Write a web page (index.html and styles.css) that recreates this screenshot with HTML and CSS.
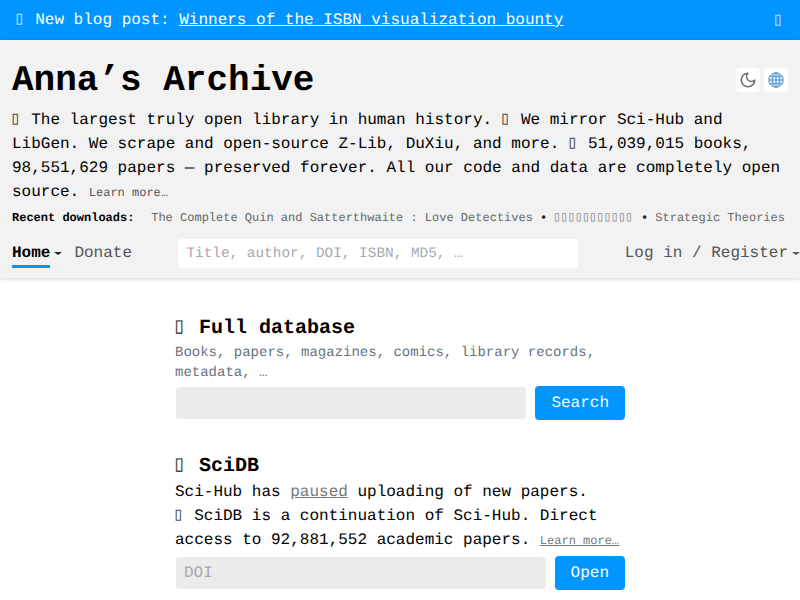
FILE: index.html
```html
<!DOCTYPE html>
<html lang="en">
<head>
<meta charset="utf-8">
<title>Anna’s Archive</title>
<link rel="stylesheet" href="styles.css">
</head>
<body>
<div class="banner">
  <div class="banner-text"><span class="tofu">▯</span> New blog post: <a href="#">Winners of the ISBN visualization bounty</a></div>
  <span class="banner-close tofu">▯</span>
</div>
<header class="header">
  <div class="title-row">
    <h1 class="title">Anna’s Archive</h1>
    <div class="tools">
      <a class="tool" href="#" aria-label="Theme">
        <svg class="moon-icon" viewBox="0 0 24 24" fill="none" stroke="#6b6b76" stroke-width="2" stroke-linecap="round" stroke-linejoin="round"><path d="M12 3a6 6 0 0 0 9 9 9 9 0 1 1-9-9Z"/></svg>
      </a>
      <a class="tool" href="#" aria-label="Language">
        <svg class="globe-icon" viewBox="0 0 24 24" fill="#d3e6f6" stroke="#4a8ec9" stroke-width="1.3"><circle cx="12" cy="12" r="11"/><ellipse cx="12" cy="12" rx="5.5" ry="11" fill="none"/><path fill="none" d="M12 1v22M1 12h22M2.6 6.5h18.8M2.6 17.5h18.8"/></svg>
      </a>
    </div>
  </div>
  <p class="tagline"><span class="tofu">▯</span> The largest truly open library in human history. <span class="tofu">▯</span> We mirror Sci-Hub and LibGen. We scrape and open-source Z-Lib, DuXiu, and more. <span class="tofu">▯</span> 51,039,015 books, 98,551,629 papers — preserved forever. All our code and data are completely open source. <a class="more" href="#">Learn more…</a></p>
  <div class="recent">
    <span class="recent-label">Recent downloads:</span>
    <span class="recent-list"><a href="#">The Complete Quin and Satterthwaite : Love Detectives</a> <b class="dot">•</b> <a href="#"><span class="tofu">▯▯▯▯▯▯▯▯▯▯▯</span></a> <b class="dot">•</b> <a href="#">Strategic Theories</a></span>
  </div>
  <nav class="nav">
    <div class="nav-left">
      <a class="nav-link active" href="#">Home<span class="caret"></span></a>
      <a class="nav-link" href="#">Donate</a>
    </div>
    <input class="nav-search" type="text" placeholder="Title, author, DOI, ISBN, MD5, …">
    <a class="nav-link login" href="#">Log in / Register<span class="caret"></span></a>
  </nav>
</header>
<main class="main">
  <section class="block">
    <h2 class="block-title"><span class="tofu">▯</span> Full database</h2>
    <p class="block-desc">Books, papers, magazines, comics, library records, metadata, …</p>
    <form class="search-row">
      <input class="field" type="text">
      <button class="btn" type="button">Search</button>
    </form>
  </section>
  <section class="block">
    <h2 class="block-title"><span class="tofu">▯</span> SciDB</h2>
    <p class="block-text">Sci-Hub has <a class="muted" href="#">paused</a> uploading of new papers.<br><span class="tofu">▯</span> SciDB is a continuation of Sci-Hub. Direct access to 92,881,552 academic papers. <a class="more muted" href="#">Learn more…</a></p>
    <form class="search-row">
      <input class="field" type="text" placeholder="DOI">
      <button class="btn" type="button">Open</button>
    </form>
  </section>
</main>
</body>
</html>
```
FILE: styles.css
```css
* { box-sizing: border-box; }
html, body { margin: 0; padding: 0; }
body {
  font-family: "Liberation Mono", monospace;
  font-size: 16px;
  line-height: 24px;
  color: #000;
  background: #fff;
  overflow-x: hidden;
  text-rendering: geometricPrecision;
}
a { color: inherit; }
.tofu {
  font-family: "DejaVu Sans Mono", monospace;
  font-weight: 400;
  font-size: 1.15em;
  letter-spacing: -0.0802em;
  margin-left: -0.12em;
  margin-right: 0.12em;
  line-height: 0;
  opacity: 0.7;
}
.banner {
  display: flex;
  justify-content: space-between;
  align-items: center;
  height: 40px;
  padding: 0 16px;
  background: #0095ff;
  color: #fff;
}
.banner-close { color: #b3dcff; opacity: 1; }
.header {
  padding: 20px 12px 10px;
  background: #f2f2f2;
  box-shadow: 0 1px 4px rgba(0, 0, 0, 0.18);
  position: relative;
}
.title-row {
  display: flex;
  justify-content: space-between;
  align-items: flex-start;
  margin-bottom: 6px;
}
.title { margin: 0; font-size: 36px; line-height: 42px; font-weight: 700; }
.tools { display: flex; gap: 4px; margin-top: 8px; }
.tool {
  display: flex;
  align-items: center;
  justify-content: center;
  width: 24px;
  height: 24px;
  background: #fff;
  border-radius: 4px;
}
.moon-icon { width: 18px; height: 18px; display: block; }
.globe-icon { width: 16px; height: 16px; display: block; }
.tagline { margin: 0; }
.more { font-size: 12px; color: #555; text-decoration: none; line-height: 0; }
.recent {
  display: flex;
  gap: 16.8px;
  font-size: 12px;
  line-height: 16px;
  margin-top: 6px;
  white-space: nowrap;
  overflow: hidden;
}
.recent-label { font-weight: 700; }
.recent-list { color: #666; white-space: pre; }
.recent-list a { text-decoration: none; }
.dot { font-weight: 700; color: #222; }
.nav {
  display: flex;
  align-items: flex-start;
  justify-content: space-between;
  margin-top: 13px;
  height: 29px;
  margin-right: -12px;
}
.nav-left { display: flex; gap: 24px; }
.nav-link {
  display: block;
  height: 29px;
  color: #555;
  text-decoration: none;
  position: relative;
  line-height: 28px;
}
.nav-link.active { color: #000; font-weight: 700; border-bottom: 3px solid #0095ff; }
.caret {
  position: absolute;
  left: 100%;
  top: 13px;
  margin-left: 4px;
  border-left: 4px solid transparent;
  border-right: 4px solid transparent;
  border-top: 3px solid currentColor;
}
.active .caret { color: #222; }
.login { margin-right: 12px; }
.nav-search {
  width: 400px;
  height: 29px;
  padding: 0 8px;
  border: 0;
  border-radius: 4px;
  background: #fff;
  font: 14.4px "Liberation Mono", monospace;
  text-rendering: geometricPrecision;
}
.nav-search::placeholder { color: #a8a8b0; }
.main { width: 450px; margin: 0 auto; padding-top: 37px; }
.block { margin-bottom: 33px; }
.block-title { margin: 0; font-size: 20px; line-height: 28px; font-weight: 700; }
.block-desc { margin: 0 0 3px; font-size: 14px; line-height: 20px; color: #6b7280; }
.block-text { margin: -1px 0 4px; }
.muted { color: #777; }
.block-text .more { color: #777; text-decoration: underline; }
.search-row { display: flex; align-items: center; gap: 8px; margin: 0; }
.field {
  flex: 1;
  min-width: 0;
  height: 34px;
  padding: 0 8px;
  border: 1px solid #fff;
  border-radius: 4px;
  background: #ececec;
  font: 16px "Liberation Mono", monospace;
  text-rendering: geometricPrecision;
}
.field::placeholder { color: #a8a8a8; }
.btn {
  height: 34px;
  padding: 0 16px;
  border: 0;
  border-radius: 4px;
  background: #0095ff;
  color: #fff;
  font: 16px "Liberation Mono", monospace;
  text-rendering: geometricPrecision;
}
```
